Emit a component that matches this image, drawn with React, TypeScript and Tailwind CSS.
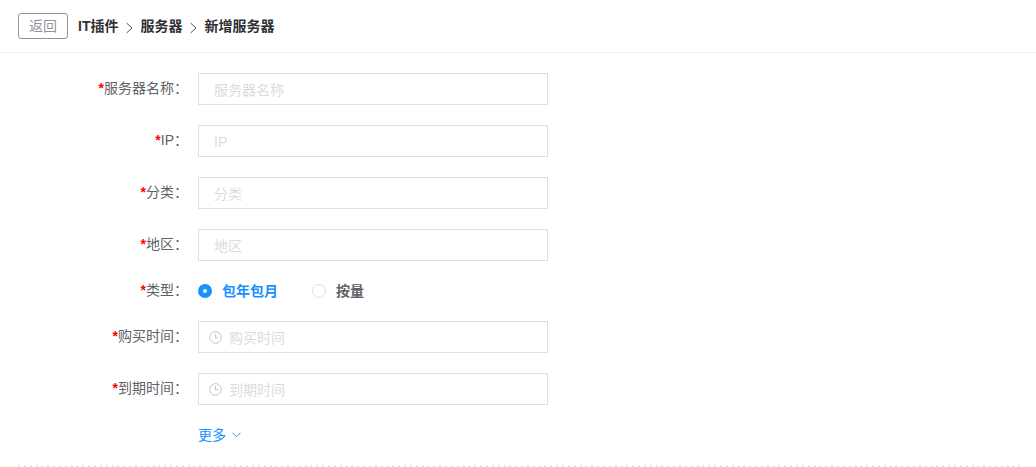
const Field = ({ label, time }: { label: string; time?: boolean }) => {
  return (
    <div className="flex h-8 mb-5 items-start">
      <label className="w-[188px] text-right text-sm leading-[30px] text-[#606266] shrink-0">
        <span className="text-[#f00] font-bold">*</span>
        {label}：
      </label>
      <div className="ml-[10px] w-[350px] h-8 border border-[#dcdee8] flex items-center text-sm text-[#d9dbe1] pt-[1px]">
        {time ? (
          <>
            <svg className="ml-[10px] mr-[7px]" width="13" height="13" viewBox="0 0 13 13" fill="none" stroke="#c0c4cc" strokeWidth="1">
              <circle cx="6.5" cy="6.5" r="5.8" />
              <path d="M6.5 3v3.7h3" />
            </svg>
            <span>{label}</span>
          </>
        ) : (
          <span className="pl-[15px]">{label}</span>
        )}
      </div>
    </div>
  );
};

const Chevron = () => (
  <svg className="ml-[8px] mr-[7px] mt-[4px]" width="7" height="12" viewBox="0 0 7 12" fill="none" stroke="#555" strokeWidth="1">
    <path d="M0.5 1l5.5 5-5.5 5" />
  </svg>
);

export default function App() {
  return (
    <div className="w-[1036px] h-[467px] overflow-hidden bg-white font-['Liberation_Sans','Noto_Sans_CJK_SC',sans-serif]">
      <div className="h-[53px] border-b border-[#ebeef5] flex items-center pl-[18px] pb-[1px]">
        <button className="w-[50px] h-[26px] border border-[#909399] rounded-[3px] text-sm text-[#909399]">
          返回
        </button>
        <div className="ml-[10px] flex items-center text-sm font-bold text-[#303133]">
          <span>IT插件</span>
          <Chevron />
          <span>服务器</span>
          <Chevron />
          <span>新增服务器</span>
        </div>
      </div>

      <div className="pt-5">
        <Field label="服务器名称" />
        <Field label="IP" />
        <Field label="分类" />
        <Field label="地区" />

        <div className="flex items-center h-5 mb-5">
          <label className="w-[188px] pb-[2px] text-right text-sm text-[#606266] shrink-0">
            <span className="text-[#f00] font-bold">*</span>类型：
          </label>
          <div className="ml-[10px] flex items-center text-sm font-bold">
            <span className="w-[14px] h-[14px] rounded-full bg-[#1890ff] flex items-center justify-center">
              <span className="w-1 h-1 rounded-full bg-white" />
            </span>
            <span className="ml-[10px] text-[#1890ff]">包年包月</span>
            <span className="ml-[34px] w-[14px] h-[14px] rounded-full border border-[#dcdee8]" />
            <span className="ml-[10px] text-[#606266]">按量</span>
          </div>
        </div>

        <Field label="购买时间" time />
        <Field label="到期时间" time />

        <div className="ml-[198px] flex items-center h-5 text-sm text-[#1890ff]">
          更多
          <svg className="ml-[6px]" width="9" height="6" viewBox="0 0 9 6" fill="none" stroke="#1890ff" strokeWidth="1">
            <path d="M0.5 0.8l4 4 4-4" />
          </svg>
        </div>
      </div>

      <div className="ml-[18px] mr-[14px] mt-[20px] h-[2px] bg-[repeating-linear-gradient(to_right,#e4e6ec_0,#e4e6ec_2px,transparent_2px,transparent_5.85px)]" />
    </div>
  );
}
